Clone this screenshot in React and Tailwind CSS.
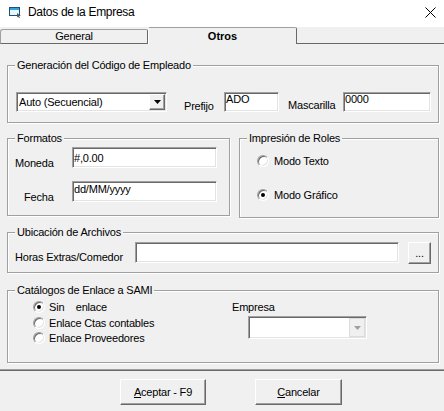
import React from "react";

const sunken =
  "border border-t-[#a0a0a0] border-l-[#a0a0a0] border-b-white border-r-white shadow-[inset_1px_1px_0_#696969,inset_-1px_-1px_0_#e3e3e3] p-[1px]";
const raised =
  "border border-t-white border-l-white border-b-[#696969] border-r-[#696969] shadow-[inset_-1px_-1px_0_#a0a0a0] bg-[#f0f0f0]";
const groupBox =
  "relative border border-[#a0a0a0] shadow-[inset_1px_1px_0_#fff,1px_1px_0_#fff]";

function GroupLabel({ children }) {
  return (
    <span className="absolute -top-[7px] left-[7px] px-[2px] bg-[#f0f0f0] leading-[13px] whitespace-nowrap">
      {children}
    </span>
  );
}

function Radio({ checked }) {
  return (
    <span className="w-[12px] h-[12px] rounded-full bg-white border border-t-[#a0a0a0] border-l-[#a0a0a0] border-b-white border-r-white shadow-[inset_1px_1px_0_#696969,inset_-1px_-1px_0_#e3e3e3] flex items-center justify-center shrink-0">
      {checked && <span className="w-[4px] h-[4px] rounded-full bg-black" />}
    </span>
  );
}

function Arrow({ color = "#000" }) {
  return (
    <svg width="7" height="4" viewBox="0 0 7 4">
      <polygon points="0,0 7,0 3.5,4" fill={color} />
    </svg>
  );
}

export default function App() {
  return (
    <div className="w-[444px] h-[411px] bg-[#f0f0f0] flex flex-col overflow-hidden text-black text-[11px] tracking-[-0.2px] font-['Liberation_Sans',Arial,sans-serif]">
      {/* Title bar */}
      <div className="h-[27px] shrink-0 bg-white flex items-start">
        <svg className="ml-[9px] mt-[7px]" width="13" height="11" viewBox="0 0 13 11">
          <rect x="0.5" y="0.5" width="10" height="8" fill="#e8f6fc" stroke="#1f4e79" />
          <rect x="1" y="1" width="9" height="2" fill="#2fa4dc" />
          <path d="M8 6 L12 9 L10 9 L11 10.5 L10 11 L9 9.5 L8 10.5 Z" fill="#555" />
        </svg>
        <span className="ml-[6px] mt-[5px] text-[12px] leading-[14px] tracking-[-0.3px]">
          Datos de la Empresa
        </span>
        <svg className="ml-auto mr-[8px] mt-[7px]" width="11" height="11" viewBox="0 0 11 11">
          <path d="M0.5 0.5 L10.5 10.5 M10.5 0.5 L0.5 10.5" stroke="#000" strokeWidth="1" />
        </svg>
      </div>

      {/* Tabs */}
      <div className="h-[17px] shrink-0 flex items-end">
        <div className="w-[148px] h-[15px] bg-[#f0f0f0] border-t border-l border-r border-b border-t-[#a0a0a0] border-l-[#a0a0a0] border-r-[#696969] border-b-[#696969] rounded-tl-[3px] rounded-tr-[2px] flex justify-center">
          <span className="leading-[13px]">General</span>
        </div>
        <div className="w-[149px] h-[17px] bg-[#f0f0f0] border-t border-r border-l border-t-[#a0a0a0] border-r-[#696969] border-l-white rounded-t-[2px] flex justify-center pt-[2px]">
          <span className="leading-[13px] font-bold tracking-normal">Otros</span>
        </div>
        <div className="flex-1 h-[1px] bg-[#696969]" />
      </div>

      {/* Page */}
      <div className="h-[325px] shrink-0 flex flex-col pl-[7px] pr-[5px]">
        {/* Generación */}
        <div className={`${groupBox} mt-[21px] h-[58px]`}>
          <GroupLabel>Generación del Código de Empleado</GroupLabel>
          <div className="pt-[26px] pl-[8px] flex items-start">
            <div className={`${sunken} w-[151px] h-[20px] bg-white flex items-center`}>
              <span className="flex-1 pl-[1px] leading-[13px] whitespace-nowrap">Auto (Secuencial)</span>
              <div className={`${raised} w-[16px] h-[16px] flex items-center justify-center`}>
                <Arrow />
              </div>
            </div>
            <span className="ml-[17px] mt-[8px] w-[40px] leading-[13px]">Prefijo</span>
            <div className={`${sunken} w-[55px] h-[20px] bg-white`}>
              <div className="-mt-[1px] leading-[13px]">ADO</div>
            </div>
            <span className="ml-[9px] mt-[7px] w-[55px] leading-[13px]">Mascarilla</span>
            <div className={`${sunken} w-[88px] h-[20px] bg-white`}>
              <div className="-mt-[1px] leading-[13px]">0000</div>
            </div>
          </div>
        </div>

        {/* Formatos + Roles */}
        <div className="mt-[15px] flex items-start gap-[9px]">
          <div className={`${groupBox} w-[223px] h-[78px]`}>
            <GroupLabel>Formatos</GroupLabel>
            <div className="pt-[8px] pl-[7px] flex items-start">
              <span className="w-[57px] mt-[10px] leading-[13px]">Moneda</span>
              <div className={`${sunken} w-[145px] h-[21px] bg-white`}>
                <div className="mt-[3px] leading-[13px]">#,0.00</div>
              </div>
            </div>
            <div className="mt-[11px] pl-[16px] flex items-start">
              <span className="w-[48px] mt-[10px] leading-[13px]">Fecha</span>
              <div className={`${sunken} w-[145px] h-[21px] bg-white`}>
                <div className="leading-[13px]">dd/MM/yyyy</div>
              </div>
            </div>
          </div>
          <div className={`${groupBox} flex-1 h-[80px]`}>
            <GroupLabel>Impresión de Roles</GroupLabel>
            <div className="pt-[16px] pl-[17px] flex items-start">
              <Radio />
              <span className="ml-[5px] leading-[13px]">Modo Texto</span>
            </div>
            <div className="mt-[21px] pl-[17px] flex items-start">
              <Radio checked />
              <span className="ml-[5px] leading-[13px]">Modo Gráfico</span>
            </div>
          </div>
        </div>

        {/* Ubicación */}
        <div className={`${groupBox} mt-[14px] h-[41px]`}>
          <GroupLabel>Ubicación de Archivos</GroupLabel>
          <div className="pt-[9px] pl-[7px] flex items-start">
            <span className="w-[120px] mt-[9px] leading-[13px] whitespace-nowrap">Horas Extras/Comedor</span>
            <div className={`${sunken} w-[264px] h-[21px] bg-white`} />
            <div className={`${raised} ml-[9px] w-[23px] h-[22px] flex items-center justify-center`}>
              <span className="leading-[13px]">...</span>
            </div>
          </div>
        </div>

        {/* Catálogos */}
        <div className={`${groupBox} mt-[17px] h-[73px]`}>
          <GroupLabel>Catálogos de Enlace a SAMI</GroupLabel>
          <div className="pt-[10px] pl-[25px] flex items-start">
            <div className="w-[199px] flex flex-col">
              <div className="flex items-start h-[16px]">
                <Radio checked />
                <span className="ml-[4px] leading-[13px] whitespace-pre">Sin    enlace</span>
              </div>
              <div className="flex items-start h-[15px]">
                <Radio />
                <span className="ml-[4px] leading-[13px] whitespace-nowrap">Enlace Ctas contables</span>
              </div>
              <div className="flex items-start h-[15px]">
                <Radio />
                <span className="ml-[4px] leading-[13px] whitespace-nowrap">Enlace Proveedores</span>
              </div>
            </div>
            <div className="flex flex-col">
              <span className="leading-[13px]">Empresa</span>
              <div className={`${sunken} mt-[2px] ml-[16px] w-[119px] h-[23px] bg-white flex justify-end`}>
                <div className="w-[16px] h-full bg-[#f0f0f0] border border-[#dcdcdc] flex items-center justify-center">
                  <Arrow color="#a0a0a0" />
                </div>
              </div>
            </div>
          </div>
        </div>
      </div>

      {/* Separator */}
      <div className="h-[2px] shrink-0 border-t border-[#a0a0a0] bg-[#696969]" />

      {/* Buttons */}
      <div className="flex-1 flex items-start pt-[8px] pl-[120px]">
        <button className={`${raised} w-[86px] h-[26px] flex items-center justify-center leading-[13px]`}>
          <span><span className="underline">A</span>ceptar - F9</span>
        </button>
        <button className={`${raised} ml-[49px] w-[87px] h-[26px] flex items-center justify-center leading-[13px]`}>
          <span><span className="underline">C</span>ancelar</span>
        </button>
      </div>
    </div>
  );
}
